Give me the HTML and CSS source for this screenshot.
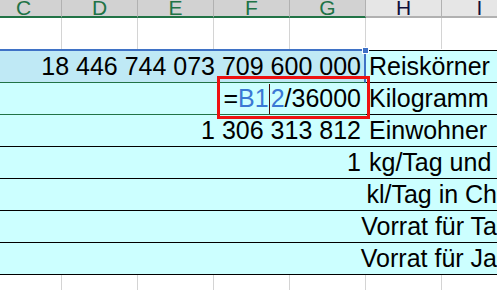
FILE: index.html
```html
<!DOCTYPE html>
<html lang="de">

<head>
  <meta charset="UTF-8">
  <meta name="viewport" content="width=device-width, initial-scale=1.0">
  <title>Reiskörner</title>
  <link rel="stylesheet" href="styles.css">
</head>

<body>
  <div class="sheet">
    <!-- Spaltenköpfe, C bis G sind markiert -->
    <div class="cols heads">
      <div class="head sel">C</div>
      <div class="head sel">D</div>
      <div class="head sel">E</div>
      <div class="head sel">F</div>
      <div class="head sel">G</div>
      <div class="head">H</div>
      <div class="head">I</div>
    </div>

    <div class="cols blank">
      <div></div><div></div><div></div><div></div><div></div><div></div><div></div>
    </div>

    <div class="rows">
      <div class="row first">
        <div class="num">18 446 744 073 709 600 000</div>
        <div class="label">Reiskörner</div>
      </div>
      <div class="row editing">
        <div class="num">
          <span class="editcell">=<span class="ref">B1</span><i class="caret"></i><span class="ref">2</span>/36000</span>
        </div>
        <div class="label">Kilogramm</div>
      </div>
      <div class="row">
        <div class="num">1 306 313 812</div>
        <div class="label">Einwohner</div>
      </div>
      <div class="row">
        <div class="num">1</div>
        <div class="label">kg/Tag und</div>
      </div>
      <div class="row">
        <div class="num"></div>
        <div class="label">kl/Tag in Ch</div>
      </div>
      <div class="row">
        <div class="num"></div>
        <div class="label">Vorrat für Ta</div>
      </div>
      <div class="row">
        <div class="num"></div>
        <div class="label">Vorrat für Ja</div>
      </div>
    </div>

    <div class="cols blank">
      <div></div><div></div><div></div><div></div><div></div><div></div><div></div>
    </div>

    <!-- Ziehpunkt der Markierung und rote Hervorhebung -->
    <span class="handle"></span>
    <span class="mark"></span>
  </div>
</body>

</html>
```

FILE: styles.css
```css
html,
body {
  margin: 0;
  background: #fff;
}

.sheet {
  position: relative;
  width: 497px;
  height: 290px;
  overflow: hidden;
  font-family: "Liberation Sans", Arial, sans-serif;
  color: #000;
}

.cols {
  display: grid;
  grid-template-columns: repeat(7, 76px);
  margin-left: -14px;
}

.head {
  height: 16px;
  line-height: 15px;
  font-size: 21px;
  text-align: center;
  color: #10103a;
  background: #e6e6e6;
  border-right: 1px solid #b1b1b1;
  border-bottom: 2px solid #b1b1b1;
}

.head.sel {
  background: #d2d2d2;
  color: #217346;
  border-bottom-color: #217346;
}

.blank div {
  height: 31px;
  border-right: 1px solid #d4d4d4;
}

.row {
  display: flex;
  font-size: 25px;
  line-height: 27px;
}

.num,
.label {
  display: flex;
  align-items: flex-end;
  padding-bottom: 2px;
  box-sizing: border-box;
  height: 32px;
  background: #ccffff;
  border-bottom: 1px solid #000;
}

.num {
  width: 366px;
  justify-content: flex-end;
  padding-right: 5px;
}

.label {
  flex: 1;
  padding-left: 3px;
  white-space: nowrap;
}

.first .num {
  height: 34px;
  background: #bfe9f5;
  border-top: 2px solid #3f72c6;
  border-right: 2px solid #3f72c6;
  border-bottom-color: #217346;
  padding-right: 3px;
}

.first .label {
  height: 33px;
  margin-top: 1px;
  border-top: 1px solid #000;
}

.editing .num {
  border-bottom-color: #217346;
}

.editcell {
  display: flex;
  align-items: flex-end;
}

.ref {
  color: #3a78d4;
}

.caret {
  width: 1px;
  height: 30px;
  margin: 0 1px 0 0;
  background: #4a0a0a;
  position: relative;
  top: 2px;
}

.handle {
  position: absolute;
  left: 362px;
  top: 47px;
  width: 5px;
  height: 5px;
  background: #3f72c6;
  border: 1px solid #fff;
}

.mark {
  position: absolute;
  left: 217px;
  top: 76px;
  width: 147px;
  height: 37px;
  border: 3px solid #ee1111;
}
```
